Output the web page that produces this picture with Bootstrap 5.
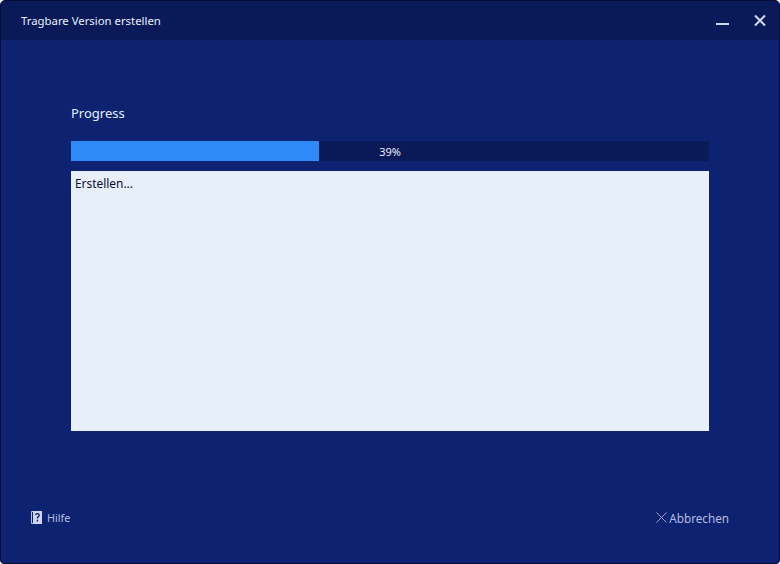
<!DOCTYPE html>
<html lang="de"><head><meta charset="utf-8"><title>Tragbare Version erstellen</title>
<link href="https://cdn.jsdelivr.net/npm/bootstrap@5.3.0/dist/css/bootstrap.min.css" rel="stylesheet">
<style>
html,body{height:564px;width:780px;margin:0;background:#fff;overflow:hidden}
body{font-family:"Noto Sans","DejaVu Sans",sans-serif;font-size:11.35px}
.win{width:780px;height:564px;background:#0d2270;border:1px solid #050d33;border-radius:5px 5px 4px 4px;overflow:hidden}
.tbar{height:39px;background:#0a1a59;padding-left:20px;padding-right:11px;color:#e8eefb}
.tbtn{width:16px;height:16px;display:block}
.tgap{gap:21px}
.content{padding:63px 70px 0}
.prog-title{font-size:13px;line-height:20px;color:#e6f0ff;margin:0 0 18px}
.pbar{height:20px;background:#0a1a59;border-radius:0;position:relative}
.pbar .progress-bar{background:#2e8bf7}
.plabel{position:absolute;inset:0;text-align:center;line-height:22px;color:#e8eefb;font-size:11px}
.logbox{height:260px;margin-top:10px;background:#e7effb;color:#0a0f30;padding:4px;line-height:16px;font-size:11.9px}
.foot{color:#b4bfe0;padding:0 50px 36px 30px;line-height:18px}
.hilfe{font-size:10.8px;padding-top:1px}
.abbr{font-size:11.7px;padding-top:1px}
.hicon{width:11px;height:13px;display:block}
.xicon{width:11px;height:11px;display:block}
.hgap{gap:5px}
.xgap{gap:2px}
</style></head><body>
<div class="win d-flex flex-column">
 <div class="tbar d-flex align-items-center justify-content-between">
  <span>Tragbare Version erstellen</span>
  <div class="d-flex align-items-center tgap">
   <svg class="tbtn" viewBox="0 0 16 16"><rect x="1" y="10" width="13" height="2" fill="#d0d7ee"/></svg>
   <svg class="tbtn" viewBox="0 0 16 16"><path d="M3 2.5L13 12.5M13 2.5L3 12.5" stroke="#d0d7ee" stroke-width="2" fill="none"/></svg>
  </div>
 </div>
 <div class="content flex-grow-1">
  <p class="prog-title">Progress</p>
  <div class="progress pbar"><div class="progress-bar" role="progressbar" style="width:38.9%" aria-valuenow="39" aria-valuemin="0" aria-valuemax="100"></div><div class="plabel">39%</div></div>
  <div class="logbox">Erstellen...</div>
 </div>
 <div class="foot d-flex justify-content-between align-items-center">
  <div class="d-flex align-items-center hgap">
   <svg class="hicon" viewBox="0 0 11 13"><path d="M3 0.5H0.5V12.5H3" stroke="#b4bfe0" fill="none"/><rect x="2" y="0" width="9" height="13" fill="#cfd6ec"/><path d="M4.6 4C4.6 2.2 8.2 2.2 8.2 4.2C8.2 5.6 6.4 5.6 6.4 7.6M6.4 8.8V10.4" stroke="#0d2270" stroke-width="1.4" fill="none"/></svg>
   <span class="hilfe">Hilfe</span>
  </div>
  <div class="d-flex align-items-center xgap">
   <svg class="xicon" viewBox="0 0 11 11"><path d="M0.5 0.5L10.5 10.5M10.5 0.5L0.5 10.5" stroke="#9aa6d0" fill="none"/></svg>
   <span class="abbr">Abbrechen</span>
  </div>
 </div>
</div>
</body></html>
